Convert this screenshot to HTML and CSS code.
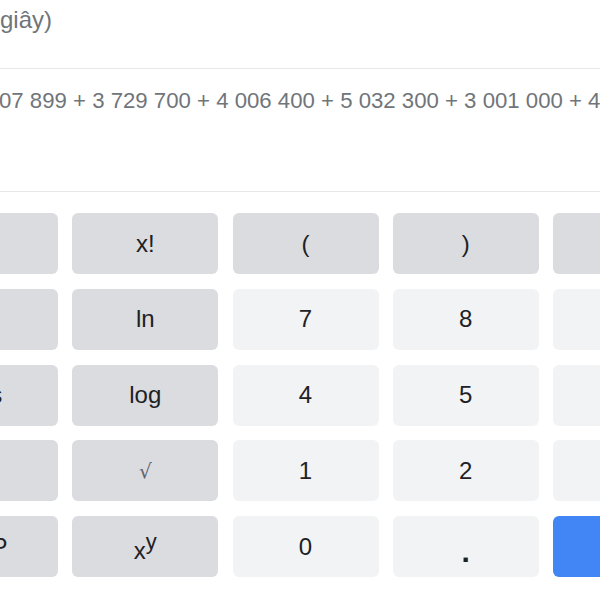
FILE: index.html
```html
<!DOCTYPE html>
<html lang="vi">
<head>
<meta charset="UTF-8">
<meta name="viewport" content="width=device-width, initial-scale=1.0">
<title>Máy tính</title>
<link rel="stylesheet" href="styles.css">
</head>
<body>

<div class="calc">
  <div class="calc-head">
    <span class="unit">(giây)</span>
  </div>

  <div class="calc-display">
    <div class="expr">07 899 + 3 729 700 + 4 006 400 + 5 032 300 + 3 001 000 + 4 120 500</div>
  </div>

  <div class="keys">
    <!-- hàng 1 -->
    <button class="key fn side"><span class="small">Deg</span></button>
    <button class="key fn">x!</button>
    <button class="key fn">(</button>
    <button class="key fn">)</button>
    <button class="key fn">%</button>
    <button class="key fn">AC</button>

    <!-- hàng 2 -->
    <button class="key fn side">sin</button>
    <button class="key fn">ln</button>
    <button class="key num">7</button>
    <button class="key num">8</button>
    <button class="key num">9</button>
    <button class="key fn">÷</button>

    <!-- hàng 3 -->
    <button class="key fn side">cos</button>
    <button class="key fn">log</button>
    <button class="key num">4</button>
    <button class="key num">5</button>
    <button class="key num">6</button>
    <button class="key fn">×</button>

    <!-- hàng 4 -->
    <button class="key fn side">tan</button>
    <button class="key fn"><span class="root">√</span></button>
    <button class="key num">1</button>
    <button class="key num">2</button>
    <button class="key num">3</button>
    <button class="key fn">−</button>

    <!-- hàng 5 -->
    <button class="key fn side">EXP</button>
    <button class="key fn"><span class="pow">x<sup>y</sup></span></button>
    <button class="key num">0</button>
    <button class="key num"><b class="dot">.</b></button>
    <button class="key eq">=</button>
    <button class="key fn">+</button>
  </div>
</div>

</body>
</html>
```

FILE: styles.css
```css
body {
  margin: 0;
  background-color: #ffffff;
  font-family: 'Liberation Sans', Arial, sans-serif;
  color: #202124;
  overflow: hidden;
}

.calc {
  width: 600px;
}

.calc-head {
  height: 69px;
  box-sizing: border-box;
  padding-top: 6px;
  border-bottom: 1px solid #e8e8e8;
}

.unit {
  display: block;
  margin-left: -8px;
  font-size: 24px;
  line-height: 28px;
  color: #70757a;
}

.calc-display {
  height: 123px;
  box-sizing: border-box;
  padding-top: 18px;
  border-bottom: 1px solid #e8e8e8;
  overflow: hidden;
}

.expr {
  margin-left: -1px;
  font-size: 22.2px;
  line-height: 28px;
  color: #70757a;
  white-space: nowrap;
}

.keys {
  display: grid;
  grid-template-columns: repeat(6, 146px);
  grid-auto-rows: 61px;
  column-gap: 14.25px;
  row-gap: 14.75px;
  margin-left: -88px;
  padding-top: 21px;
}

.key {
  display: flex;
  align-items: center;
  justify-content: center;
  border: none;
  border-radius: 6px;
  padding: 0;
  font-family: 'Liberation Sans', Arial, sans-serif;
  font-size: 24px;
  color: #202124;
  cursor: pointer;
}

.side {
  padding-right: 3px;
}

.fn {
  background-color: #dadce0;
}

.num {
  background-color: #f1f3f4;
}

.eq {
  background-color: #4285f4;
  color: #ffffff;
}

.small {
  font-size: 14px;
  color: #5f6368;
}

.root {
  font-family: 'DejaVu Serif', serif;
  font-size: 20px;
  color: #5f6368;
}

.pow {
  position: relative;
  top: 4px;
}

.pow sup {
  font-size: 22px;
  line-height: 0;
  vertical-align: 10px;
}

.dot {
  font-size: 30px;
  line-height: 1;
  position: relative;
  top: 5px;
}
```
